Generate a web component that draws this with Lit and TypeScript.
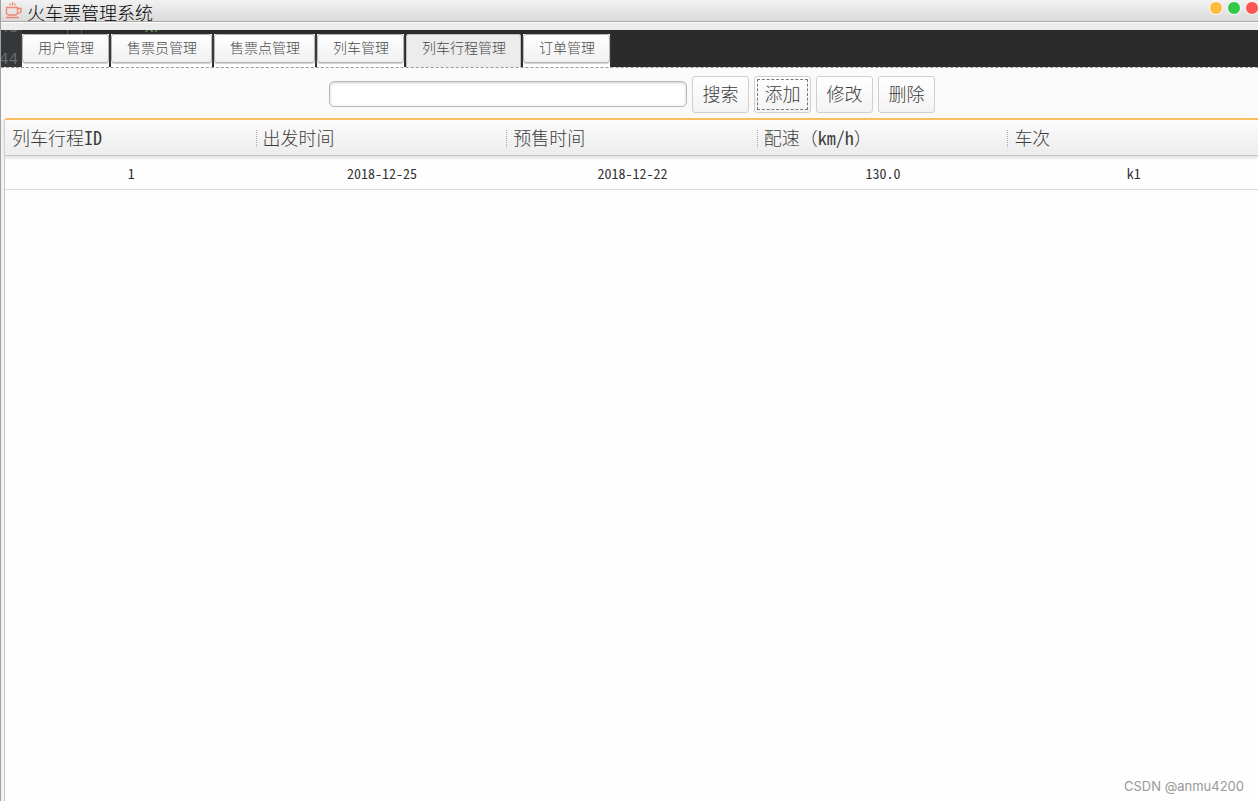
import { LitElement, html, css } from "lit";
import { customElement, state } from "lit/decorators.js";

interface Trip {
  id: string;
  departure: string;
  presale: string;
  speed: string;
  train: string;
}

const TABS = ["用户管理", "售票员管理", "售票点管理", "列车管理", "列车行程管理", "订单管理"];
const ACTIONS = ["搜索", "添加", "修改", "删除"];
const TRIPS: Trip[] = [
  { id: "1", departure: "2018-12-25", presale: "2018-12-22", speed: "130.0", train: "k1" },
];

@customElement("app-root")
export class AppRoot extends LitElement {
  static styles = css`
    :host {
      display: flex;
      flex-direction: column;
      min-height: 100vh;
      overflow: hidden;
      position: relative;
      box-sizing: border-box;
      border-left: 1px solid #a0a0a0;
      background: #fefefe;
      color: #3c3c3c;
      font-family: "Liberation Serif", "Noto Sans CJK SC", serif;
      font-weight: 300;
    }
    .titlebar {
      display: flex;
      justify-content: space-between;
      height: 21px;
      border-bottom: 1px solid #a9a9a9;
      background: linear-gradient(#f2f2f2, #dadada);
    }
    .brand {
      display: flex;
      gap: 5px;
      padding-left: 4px;
    }
    .cup {
      width: 17px;
      height: 18px;
      margin-top: 1px;
    }
    .title {
      margin: 0;
      font-size: 18px;
      line-height: 28px;
      font-weight: 300;
      color: #000;
      white-space: nowrap;
    }
    .controls {
      display: flex;
      gap: 4px;
      padding-top: 1px;
      margin-right: -1px;
    }
    .dot {
      width: 14px;
      height: 14px;
      padding: 0;
      border: 1px solid #fff;
      border-radius: 50%;
    }
    .minimize { background: #fdbc40; }
    .maximize { background: #34c84a; }
    .close { background: #fc5753; }
    .frame {
      height: 7px;
      border-top: 1px solid #fff;
      background: #ececec;
    }
    .strip {
      position: relative;
      height: 37px;
      overflow: hidden;
      background: linear-gradient(90deg, #36373a 21px, #2b2b2b 21px) padding-box;
      border-bottom: 1px dashed #9a9a9a;
    }
    .code {
      position: absolute;
      font: 16px/20px "Liberation Mono", monospace;
      color: #6b6d70;
    }
    .line-a { left: -2px; top: -12px; }
    .line-b { left: -2px; top: 20px; }
    .bars {
      position: absolute;
      left: 66px;
      top: 0;
      width: 13px;
      height: 4px;
      border: solid #55585c;
      border-width: 0 1px;
    }
    .green { left: 144px; top: -12px; color: #6a9955; font-style: italic; }
    .orange { left: 313px; top: 22px; color: #cc8a3c; }
    .tabs {
      position: relative;
      display: flex;
      gap: 2px;
      padding: 4px 0 0 21px;
    }
    .slot {
      height: 33px;
      background: #fff;
    }
    .tab {
      display: block;
      height: 29px;
      padding: 0 14px 0 15px;
      border: 1px solid #b4b4b4;
      border-radius: 3px;
      background: linear-gradient(#fff, #f0f0f0);
      box-shadow: 0 1px 1px #d0d0d0;
      font: inherit;
      font-size: 14px;
      line-height: 24px;
      color: #4a4a4a;
      white-space: nowrap;
    }
    .slot.active { background: #ececec; border-radius: 3px 3px 0 0; }
    .active .tab {
      height: 34px;
      padding-bottom: 5px;
      border-bottom: 0;
      border-radius: 3px 3px 0 0;
      border-color: #bdbdbd;
      background: #ececec;
      box-shadow: none;
    }
    .toolbar {
      display: flex;
      justify-content: center;
      align-items: flex-start;
      gap: 5px;
      padding: 8px 0 5px 5px;
      background: #fafafa;
    }
    .search {
      width: 358px;
      height: 26px;
      margin-top: 5px;
      box-sizing: border-box;
      padding: 0 8px;
      border: 1px solid #b8b8b8;
      border-radius: 5px;
      background: #fff;
      box-shadow: inset 0 1px 3px #ccc;
      font: inherit;
      font-size: 14px;
      outline: none;
    }
    .action {
      width: 57px;
      height: 37px;
      padding: 0;
      border: 1px solid #cfcfcf;
      border-radius: 3px;
      background: linear-gradient(#fff, #f3f3f3);
      font: inherit;
      font-size: 18px;
      line-height: 32px;
      color: #3c3c3c;
    }
    .focused {
      outline: 1px dashed #777;
      outline-offset: -4px;
    }
    .panel {
      flex: 1;
      margin-left: 3px;
      border-left: 1px solid #c8c8c8;
      border-top: 2px solid #fdbb58;
      border-top-left-radius: 4px;
      box-shadow: -3px 0 #f2f0f2;
      background: #fefefe;
    }
    .grid {
      width: 100%;
      table-layout: fixed;
      border-collapse: separate;
      border-spacing: 0;
    }
    .columns {
      box-shadow: 0 2px 3px #ddd;
    }
    .head {
      box-sizing: border-box;
      height: 36px;
      padding: 2px 0 0;
      border-bottom: 1px solid #c6c6c6;
      background: linear-gradient(#fcfcfc, #ececec);
      text-align: left;
      font-size: 18px;
      font-weight: 300;
      white-space: nowrap;
    }
    .label {
      display: block;
      height: 17px;
      padding-left: 6px;
      border-left: 1px dotted #aaa;
      line-height: 18px;
    }
    .head:first-child .label { border-left-color: transparent; }
    .latin {
      font-family: "Noto Sans Mono CJK SC", "Liberation Mono", monospace;
      line-height: 0;
    }
    .cell {
      box-sizing: border-box;
      height: 34px;
      padding: 0 0 0 2px;
      border-bottom: 1px solid #d8d8d8;
      text-align: center;
      font-family: "Noto Sans Mono CJK SC", "Liberation Mono", monospace;
      font-size: 14px;
      line-height: 16px;
      color: #333;
    }
    .credit {
      position: absolute;
      right: 14px;
      bottom: 6px;
      font: 13px/18px Inter, "Liberation Sans", sans-serif;
      color: #999;
    }
  `;

  @state() private current = 4;

  render() {
    return html`
      <header class="titlebar">
        <div class="brand">
          <svg class="cup" viewBox="0 0 17 18" fill="none" stroke="#f28470" stroke-width="1.3" aria-hidden="true">
            <path d="M1.5 6.5h11v5q0 2.5-2.5 2.5h-6q-2.5 0-2.5-2.5zM12.5 7.5h3.5v3.5l-3.5 1.5M1 16.5h13M5 4.5V2.5M7.5 4.5V1M10 4.5V2.5" />
          </svg>
          <h1 class="title">火车票管理系统</h1>
        </div>
        <div class="controls">
          <button class="dot minimize" aria-label="最小化"></button>
          <button class="dot maximize" aria-label="最大化"></button>
          <button class="dot close" aria-label="关闭"></button>
        </div>
      </header>
      <div class="frame"></div>
      <nav class="strip">
        <span class="code line-a" aria-hidden="true">43</span>
        <span class="bars" aria-hidden="true"></span>
        <span class="code green" aria-hidden="true">x/</span>
        <span class="code line-b" aria-hidden="true">44</span>
        <span class="code orange" aria-hidden="true">(</span>
        <div class="tabs" role="tablist">
          ${TABS.map(
            (name, i) => html`<div class="slot ${i === this.current ? "active" : ""}" role="presentation">
              <button class="tab" role="tab" aria-selected=${i === this.current} @click=${() => (this.current = i)}>${name}</button>
            </div>`
          )}
        </div>
      </nav>
      <form class="toolbar" @submit=${(e: Event) => e.preventDefault()}>
        <input class="search" type="text" aria-label="搜索" />
        ${ACTIONS.map(
          (name, i) => html`<button type="button" class="action ${i === 1 ? "focused" : ""}">${name}</button>`
        )}
      </form>
      <main class="panel">
        <table class="grid">
          <thead class="columns">
            <tr>
              <th class="head"><span class="label">列车行程<span class="latin">ID</span></span></th>
              <th class="head"><span class="label">出发时间</span></th>
              <th class="head"><span class="label">预售时间</span></th>
              <th class="head"><span class="label">配速（<span class="latin">km/h</span>）</span></th>
              <th class="head"><span class="label">车次</span></th>
            </tr>
          </thead>
          <tbody>
            ${TRIPS.map(
              (t) => html`<tr>
                <td class="cell">${t.id}</td>
                <td class="cell">${t.departure}</td>
                <td class="cell">${t.presale}</td>
                <td class="cell">${t.speed}</td>
                <td class="cell">${t.train}</td>
              </tr>`
            )}
          </tbody>
        </table>
      </main>
      <footer class="credit">CSDN @anmu4200</footer>
    `;
  }
}
